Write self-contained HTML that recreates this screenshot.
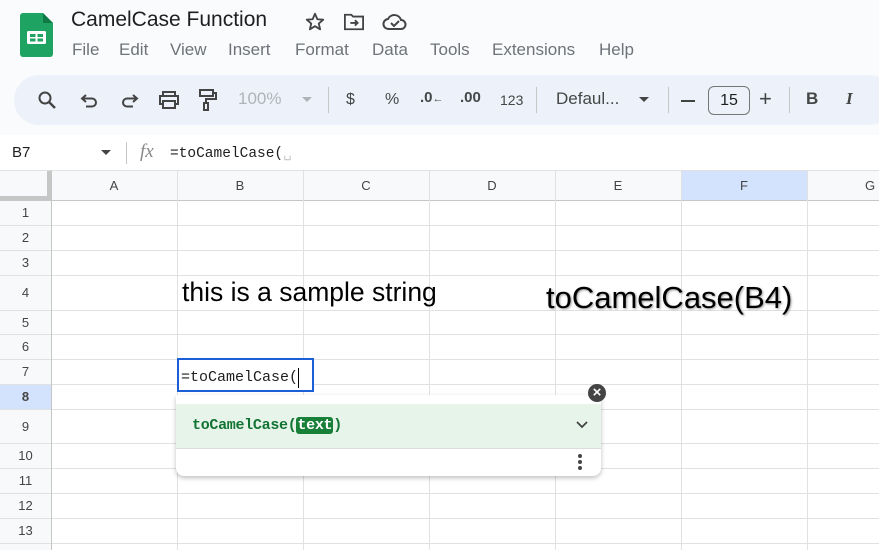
<!DOCTYPE html>
<html><head><meta charset="utf-8"><style>
*{margin:0;padding:0;box-sizing:border-box}
body{width:879px;height:550px;overflow:hidden;background:#f9fbfd;font-family:"Liberation Sans",Arial,sans-serif;position:relative}
.abs{position:absolute}
.title{left:71px;top:8px;font-size:21px;color:#1f1f1f}
.menu{top:40px;font-size:17px;color:#6f7378}
.tb{left:14px;top:75px;width:880px;height:50px;background:#edf2fa;border-radius:25px}
.ti{top:89px;font-size:16px;color:#444746}
.grid{left:0;top:170px;width:879px;height:380px;background:#fff}
.hl{position:absolute;left:0;width:879px;height:1px;background:#e1e1e1}
.vl{position:absolute;top:0;width:1px;height:380px;background:#e1e1e1}
.rn{position:absolute;left:0;width:51px;text-align:center;font-size:13px;color:#444}
.cn{position:absolute;top:8px;width:126px;text-align:center;font-size:13px;color:#444}
.mono{font-family:"Liberation Mono","DejaVu Sans Mono",monospace}
</style></head><body>
<svg class="abs" style="left:20px;top:13px" width="33" height="44" viewBox="0 0 33 44"><path d="M3 0h20l10 10v31a3 3 0 0 1-3 3H3a3 3 0 0 1-3-3V3a3 3 0 0 1 3-3z" fill="#1ea362"/><path d="M23 0v10h10z" fill="#0e7a44"/><rect x="7" y="18" width="19" height="13" rx="1.5" fill="#fff"/><rect x="10" y="21" width="5.5" height="3" fill="#1ea362"/><rect x="17.5" y="21" width="5.5" height="3" fill="#1ea362"/><rect x="10" y="25.5" width="5.5" height="3" fill="#1ea362"/><rect x="17.5" y="25.5" width="5.5" height="3" fill="#1ea362"/></svg>
<div class="abs title">CamelCase Function</div>
<svg class="abs" style="left:304px;top:11px" width="22" height="22" viewBox="0 0 24 24"><path d="M12 3l2.6 6 6.4.5-4.9 4.2 1.5 6.3L12 16.6 6.4 20l1.5-6.3L3 9.5l6.4-.5z" fill="none" stroke="#444" stroke-width="2" stroke-linejoin="round"/></svg>
<svg class="abs" style="left:343px;top:12px" width="22" height="20" viewBox="0 0 24 22"><path d="M2 3h7l2 2h11v14H2z" fill="none" stroke="#444" stroke-width="2"/><path d="M8 12h8M13 9l3 3-3 3" fill="none" stroke="#444" stroke-width="2"/></svg>
<svg class="abs" style="left:382px;top:12px" width="26" height="20" viewBox="0 0 26 20"><path d="M7 17a5 5 0 0 1-1-10 7 7 0 0 1 13 1 4.5 4.5 0 0 1 0 9z" fill="none" stroke="#444" stroke-width="2"/><path d="M9 11l3 3 5-5" fill="none" stroke="#444" stroke-width="2"/></svg>
<div class="abs menu" style="left:72px">File</div>
<div class="abs menu" style="left:119px">Edit</div>
<div class="abs menu" style="left:170px">View</div>
<div class="abs menu" style="left:228px">Insert</div>
<div class="abs menu" style="left:295px">Format</div>
<div class="abs menu" style="left:372px">Data</div>
<div class="abs menu" style="left:430px">Tools</div>
<div class="abs menu" style="left:492px">Extensions</div>
<div class="abs menu" style="left:599px">Help</div>
<div class="abs tb"></div>
<svg class="abs" style="left:37px;top:90px" width="20" height="20" viewBox="0 0 20 20"><circle cx="8" cy="8" r="5.5" fill="none" stroke="#444" stroke-width="2"/><path d="M12 12l6 6" stroke="#444" stroke-width="2.4"/></svg>
<svg class="abs" style="left:80px;top:91px" width="20" height="18" viewBox="0 0 20 18"><path d="M6 4L2 7.5 6 11M2 7.5h10a4 4 0 0 1 0 8H6" fill="none" stroke="#444" stroke-width="2"/></svg>
<svg class="abs" style="left:119px;top:91px" width="20" height="18" viewBox="0 0 20 18"><path d="M14 4l4 3.5-4 3.5M18 7.5H8a4 4 0 0 0 0 8h6" fill="none" stroke="#444" stroke-width="2"/></svg>
<svg class="abs" style="left:158px;top:90px" width="22" height="20" viewBox="0 0 22 20"><path d="M5 6V2h12v4M5 14H2V6h18v8h-3M5 11h12v7H5z" fill="none" stroke="#444" stroke-width="2"/></svg>
<svg class="abs" style="left:198px;top:88px" width="20" height="24" viewBox="0 0 20 24"><path d="M2 2h13v6H2zM15 5h3v6H8v4M6 15h4v7H6z" fill="none" stroke="#444" stroke-width="2"/></svg>
<div class="abs ti" style="left:238px;color:#b0b3b8;font-size:17px">100%</div>
<div class="abs" style="left:302px;top:97px;border:5px solid transparent;border-top-color:#b0b3b8;border-bottom:0"></div>
<div class="abs" style="left:328px;top:87px;width:1px;height:26px;background:#c4c7c5"></div>
<div class="abs ti" style="left:346px;top:91px">$</div>
<div class="abs ti" style="left:385px;top:91px">%</div>
<div class="abs ti" style="left:420px;font-size:15px;font-weight:bold">.0<span style="font-size:11px">←</span></div>
<div class="abs ti" style="left:460px;font-size:15px;font-weight:bold">.00</div>
<div class="abs ti" style="left:500px;font-size:14px;top:92px">123</div>
<div class="abs" style="left:536px;top:87px;width:1px;height:26px;background:#c4c7c5"></div>
<div class="abs ti" style="left:556px;font-size:17px">Defaul...</div>
<div class="abs" style="left:639px;top:97px;border:5px solid transparent;border-top-color:#444;border-bottom:0"></div>
<div class="abs" style="left:668px;top:87px;width:1px;height:26px;background:#c4c7c5"></div>
<div class="abs" style="left:681px;top:100px;width:14px;height:2px;background:#444"></div>
<div class="abs" style="left:708px;top:86px;width:42px;height:29px;border:1px solid #747775;border-radius:6px;text-align:center;font-size:16px;line-height:27px;color:#1f1f1f">15</div>
<div class="abs ti" style="left:759px;font-size:22px;top:86px">+</div>
<div class="abs" style="left:789px;top:87px;width:1px;height:26px;background:#c4c7c5"></div>
<div class="abs ti" style="left:806px;font-weight:bold;font-size:17px">B</div>
<div class="abs ti" style="left:846px;font-weight:bold;font-style:italic;font-size:17px;font-family:'Liberation Serif',serif">I</div>
<div class="abs" style="left:0;top:135px;width:879px;height:35px;background:#fff"></div>
<div class="abs" style="left:12px;top:144px;font-size:15px;color:#1f1f1f">B7</div>
<div class="abs" style="left:101px;top:150px;border:5px solid transparent;border-top-color:#444;border-bottom:0"></div>
<div class="abs" style="left:126px;top:142px;width:1px;height:22px;background:#c4c7c5"></div>
<div class="abs" style="left:140px;top:141px;font-size:19px;font-style:italic;color:#888;font-family:'Liberation Serif',serif">fx</div>
<div class="abs mono" style="left:170px;top:145px;font-size:14.5px;color:#1f1f1f">=toCamelCase(<span style="color:#ccc">␣</span></div>
<div class="abs grid">
<div style="position:absolute;left:0;top:0;width:879px;height:30px;background:#f8f9fa"></div>
<div style="position:absolute;left:0;top:0;width:51px;height:380px;background:#f8f9fa"></div>
<div style="position:absolute;left:681px;top:0;width:126px;height:30px;background:#d3e3fd"></div>
<div style="position:absolute;left:0;top:214px;width:51px;height:25px;background:#d3e3fd"></div>
<div style="position:absolute;left:0;top:0;width:51px;height:30px;border-right:4px solid #c4c7c5;border-bottom:4px solid #c4c7c5"></div>
<div class="hl" style="top:0"></div><div class="hl" style="top:30px;background:#c4c7c5"></div>
<div class="hl" style="top:55px"></div><div class="hl" style="top:80px"></div><div class="hl" style="top:105px"></div><div class="hl" style="top:140px"></div><div class="hl" style="top:164px"></div><div class="hl" style="top:189px"></div><div class="hl" style="top:214px"></div><div class="hl" style="top:239px"></div><div class="hl" style="top:273px"></div><div class="hl" style="top:298px"></div><div class="hl" style="top:323px"></div><div class="hl" style="top:348px"></div><div class="hl" style="top:373px"></div>
<div class="vl" style="left:51px;background:#c4c7c5"></div><div class="vl" style="left:177px"></div><div class="vl" style="left:303px"></div><div class="vl" style="left:429px"></div><div class="vl" style="left:555px"></div><div class="vl" style="left:681px"></div><div class="vl" style="left:807px"></div>
<div class="cn" style="left:51px">A</div><div class="cn" style="left:177px">B</div><div class="cn" style="left:303px">C</div><div class="cn" style="left:429px">D</div><div class="cn" style="left:555px">E</div><div class="cn" style="left:681px">F</div><div class="cn" style="left:807px">G</div>
<div class="rn" style="top:35px">1</div><div class="rn" style="top:60px">2</div><div class="rn" style="top:85px">3</div><div class="rn" style="top:115px">4</div><div class="rn" style="top:145px">5</div><div class="rn" style="top:169px">6</div><div class="rn" style="top:194px">7</div><div class="rn" style="top:219px;font-weight:bold">8</div><div class="rn" style="top:249px">9</div><div class="rn" style="top:278px">10</div><div class="rn" style="top:303px">11</div><div class="rn" style="top:328px">12</div><div class="rn" style="top:353px">13</div>
<div style="position:absolute;left:182px;top:107px;font-size:26.5px;color:#000">this is a sample string</div>
<div style="position:absolute;left:546px;top:110px;font-size:31px;color:#000;text-shadow:1px 1px 2px #999">toCamelCase(B4)</div>
</div>
<div class="abs" style="left:177px;top:358px;width:137px;height:34px;border:2px solid #1a5fd8;background:#fff"></div>
<div class="abs mono" style="left:181px;top:369px;font-size:15px;color:#1f1f1f">=toCamelCase(</div>
<div class="abs" style="left:298px;top:368px;width:1px;height:20px;background:#000"></div>
<div class="abs" style="left:176px;top:395px;width:425px;height:81px;background:#fff;border-radius:0 0 8px 8px;box-shadow:0 2px 5px rgba(0,0,0,.25)"></div>
<div class="abs" style="left:176px;top:404px;width:425px;height:45px;background:#e6f4ea;border-bottom:1px solid #dadce0"></div>
<div class="abs mono" style="left:192px;top:417px;font-size:15px;color:#137333;font-weight:bold;letter-spacing:-0.3px">toCamelCase(<span style="background:#188038;color:#fff;border-radius:3px;padding:0 1px">text</span>)</div>
<svg class="abs" style="left:576px;top:419px" width="12" height="10" viewBox="0 0 12 10"><path d="M1 3l5 5 5-5" fill="none" stroke="#444" stroke-width="1.8"/></svg>
<div class="abs" style="left:578px;top:454px;width:4px;height:4px;border-radius:2px;background:#444;box-shadow:0 6px 0 #444,0 12px 0 #444"></div>
<div class="abs" style="left:588px;top:384px;width:18px;height:18px;border-radius:9px;background:#444;color:#fff;text-align:center;font-size:15px;line-height:18px;font-weight:bold">×</div>
</body></html>
